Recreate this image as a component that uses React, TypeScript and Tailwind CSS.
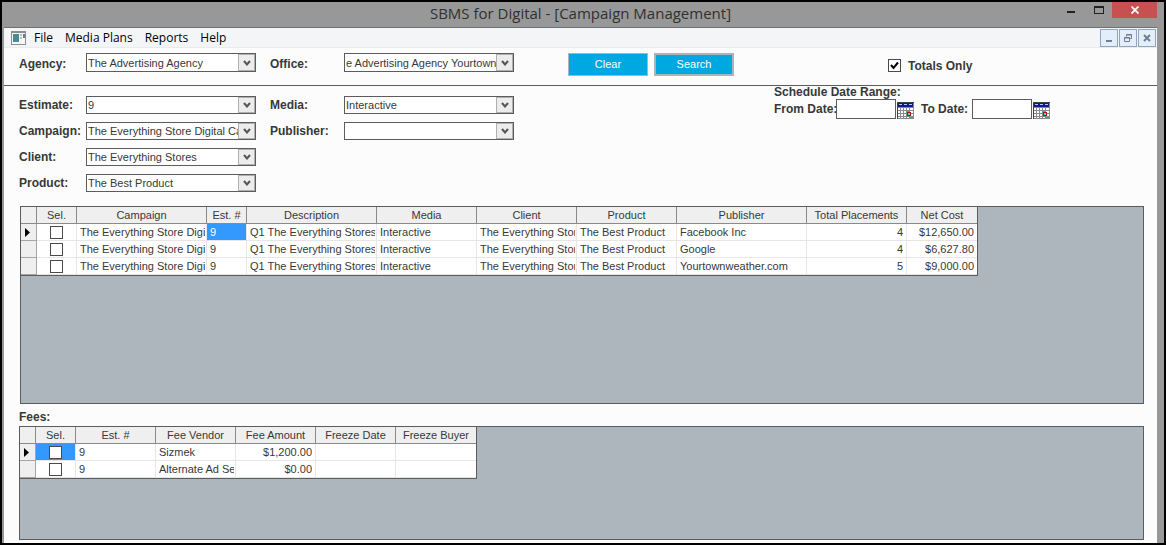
import type { ReactNode } from "react";

type Column = { label: string; width: string; align?: "right" };

const campaignColumns: Column[] = [
  { label: "Campaign", width: "w-[130px]" },
  { label: "Est. #", width: "w-10" },
  { label: "Description", width: "w-[130px]" },
  { label: "Media", width: "w-[100px]" },
  { label: "Client", width: "w-[100px]" },
  { label: "Product", width: "w-[100px]" },
  { label: "Publisher", width: "w-[130px]" },
  { label: "Total Placements", width: "w-[100px]", align: "right" },
  { label: "Net Cost", width: "w-[70px]", align: "right" },
];

const shared = ["Q1 The Everything Stores", "Interactive", "The Everything Stores", "The Best Product"];
const campaignRows: string[][] = [
  ["The Everything Store Digital", "9", ...shared, "Facebook Inc", "4", "$12,650.00"],
  ["The Everything Store Digital", "9", ...shared, "Google", "4", "$6,627.80"],
  ["The Everything Store Digital", "9", ...shared, "Yourtownweather.com", "5", "$9,000.00"],
];

const feeColumns: Column[] = [
  { label: "Est. #", width: "w-20" },
  { label: "Fee Vendor", width: "w-20" },
  { label: "Fee Amount", width: "w-20", align: "right" },
  { label: "Freeze Date", width: "w-20" },
  { label: "Freeze Buyer", width: "w-20" },
];
const feeRows: string[][] = [
  ["9", "Sizmek", "$1,200.00", "", ""],
  ["9", "Alternate Ad Server", "$0.00", "", ""],
];

type GridProps = {
  name: string;
  columns: Column[];
  rows: string[][];
  width: string;
  selected: number;
};

function Grid({ name, columns, rows, width, selected }: GridProps) {
  return (
    <table
      aria-label={name}
      className={`${width} table-fixed border-separate border-spacing-0 border-r border-b border-[#5c5c5c] bg-white text-[11px] leading-4`}
    >
      <colgroup>
        <col className="w-4" />
        <col className="w-10" />
        {columns.map((c) => (
          <col key={c.label} className={c.width} />
        ))}
      </colgroup>
      <thead>
        <tr className="h-[17px] bg-[#efefef]">
          <td className="border-r border-b border-[#8a8a8a] p-0" />
          <th className="border-r border-b border-[#8a8a8a] p-0 font-normal">Sel.</th>
          {columns.map((c) => (
            <th
              key={c.label}
              className="overflow-hidden border-r border-b border-[#8a8a8a] p-0 font-normal whitespace-nowrap last:border-r-0"
            >
              {c.label}
            </th>
          ))}
        </tr>
      </thead>
      <tbody>
        {rows.map((row, r) => (
          <tr key={r} className="h-[17px]">
            <td className="border-r border-b border-[#a5a5a5] bg-[#efefef] p-0">
              {r === 0 && (
                <svg className="ml-1 block h-[9px] w-[5px]" viewBox="0 0 5 9" aria-hidden="true">
                  <path d="M0 0L5 4.500L0 9Z" fill="#000" />
                </svg>
              )}
            </td>
            <td
              className={`border-r border-b border-[#e6e6e6] p-0 ${r === 0 && selected === 0 ? "bg-[#3399ff]" : ""}`}
            >
              <input
                type="checkbox"
                aria-label={`Select ${name} row ${r + 1}`}
                className="mx-auto block size-[13px] appearance-none border border-[#4a4a4a] bg-white"
              />
            </td>
            {row.map((cell, c) => (
              <td
                key={c}
                className={`border-r border-b border-[#e6e6e6] py-0 pl-[3px] last:border-r-0 ${
                  columns[c].align === "right" ? "pr-[3px] text-right" : "pr-px"
                } ${r === 0 && selected === c + 1 ? "bg-[#3399ff] text-white" : ""}`}
              >
                <div className="overflow-hidden whitespace-nowrap">{cell}</div>
              </td>
            ))}
          </tr>
        ))}
      </tbody>
    </table>
  );
}

type ComboProps = { id: string; label: string; value: string; labelWidth: string; tall?: boolean };

function Combo({ id, label, value, labelWidth, tall = false }: ComboProps) {
  return (
    <div className={`flex ${tall ? "items-end" : "items-center"}`}>
      <label htmlFor={id} className={`${labelWidth} text-xs font-bold whitespace-nowrap`}>
        {label}
      </label>
      <div className={`relative w-[170px] ${tall ? "h-[19px]" : "h-[18px]"}`}>
        <select
          id={id}
          defaultValue={value}
          className="block h-full w-full appearance-none rounded-none border border-[#5c5c5c] bg-white pr-4 pl-px text-[11px] leading-4"
        >
          <option>{value}</option>
        </select>
        <span className="pointer-events-none absolute inset-y-px right-px flex w-[17px] items-center justify-center border border-[#b0b0b0] bg-[#ececec]">
          <svg className="h-[6px] w-2" viewBox="0 0 8 6" fill="none" stroke="#555" strokeWidth="2" aria-hidden="true">
            <path d="M1 1L4 4.500L7 1" />
          </svg>
        </span>
      </div>
    </div>
  );
}

function CalendarIcon() {
  return (
    <svg className="block h-[17px] w-[17px]" viewBox="0 0 17 17" shapeRendering="crispEdges" aria-hidden="true">
      <rect width="17" height="17" fill="#8a8a8a" />
      <path d="M0 0h17v1H1v16H0z" fill="#404040" />
      <rect x="1" y="1" width="15" height="4" fill="#0a1a90" />
      <path d="M2 2h3v1H2zM7 2h3v1H7zM12 2h3v1h-3z" fill="#b8c4ff" />
      <path
        d="M1 6h2v2H1zM4 6h2v2H4zM7 6h2v2H7zM10 6h2v2h-2zM13 6h3v2h-3zM1 9h2v2H1zM4 9h2v2H4zM7 9h2v2H7zM13 9h3v2h-3zM1 12h2v2H1zM4 12h2v2H4zM7 12h2v2H7zM13 12h3v2h-3zM1 15h2v1H1zM4 15h2v1H4zM7 15h2v1H7zM10 15h2v1h-2z"
        fill="#fff"
      />
      <rect x="10" y="10" width="4" height="4" fill="#b01020" />
      <rect x="11" y="11" width="2" height="2" fill="#20e8f8" />
    </svg>
  );
}

function DateField({ id, label, labelWidth }: { id: string; label: string; labelWidth: string }) {
  return (
    <div className="flex items-center">
      <label htmlFor={id} className={`${labelWidth} text-xs font-bold whitespace-nowrap`}>
        {label}
      </label>
      <input id={id} type="text" className="h-5 w-[60px] border border-[#5c5c5c] bg-white px-1 text-[11px]" />
      <button type="button" aria-label={`${label} calendar`} className="ml-px self-end">
        <CalendarIcon />
      </button>
    </div>
  );
}

function ChildButton({ label, children }: { label: string; children: ReactNode }) {
  return (
    <button
      type="button"
      aria-label={label}
      className="flex h-[18px] w-[18px] items-center justify-center border border-[#8ea5bd] bg-[#e3eefa]"
    >
      {children}
    </button>
  );
}

export default function App() {
  return (
    <div className="flex min-h-screen flex-col border-2 border-black bg-[#989898] pr-[7px] pl-[2px] font-['Liberation_Sans',Arial,sans-serif] text-[#383838]">
      <header className="grid h-[25px] grid-cols-[1fr_auto_1fr]">
        <span />
        <h1 className="font-['Open_Sans','Segoe_UI',sans-serif] text-[15px] leading-[22px] text-[#303030]">
          SBMS for Digital - [Campaign Management]
        </h1>
        <div className="flex h-4 justify-end">
          <button type="button" aria-label="Minimize" className="flex w-7 items-center justify-center">
            <svg className="h-[10px] w-[10px]" viewBox="0 0 10 10" aria-hidden="true">
              <path d="M1 6h8v2H1z" fill="#202020" />
            </svg>
          </button>
          <button type="button" aria-label="Maximize" className="flex w-[27px] items-center justify-center">
            <svg className="h-[10px] w-[10px]" viewBox="0 0 10 10" aria-hidden="true">
              <path d="M0 1h10v8H0zM1 3v5h8V3z" fill="#202020" fillRule="evenodd" />
            </svg>
          </button>
          <button type="button" aria-label="Close" className="flex w-[45px] items-center justify-center bg-[#c75050]">
            <svg className="h-2 w-2" viewBox="0 0 8 8" stroke="#fff" strokeWidth="1.800" aria-hidden="true">
              <path d="M.5.500l7 7M7.500.500l-7 7" />
            </svg>
          </button>
        </div>
      </header>

      <main className="flex flex-1 flex-col border-t border-[#707070] bg-[#fcfcfc] pb-[3px]">
        <nav
          aria-label="Main menu"
          className="flex h-5 items-center border-b border-[#ebebeb] bg-[#f4f5f7] pr-px pl-[7px] font-['Open_Sans','Segoe_UI',sans-serif] text-xs text-black"
        >
          <svg className="mr-2 h-[14px] w-[15px]" viewBox="0 0 15 14" aria-hidden="true">
            <rect x=".5" y=".5" width="14" height="13" fill="#f7f7f7" stroke="#8a8f94" />
            <path d="M0 0h15v2H0z" fill="#8a8f94" />
            <rect x="2" y="3" width="6" height="8" fill="#4d8a96" />
            <path d="M9 3h2v2H9zM9 6h2v2H9z" fill="#b8bdc2" />
            <path d="M12 3h2v4h-2z" fill="#4d8a96" />
          </svg>
          <div className="flex gap-3">
            <button type="button">File</button>
            <button type="button">Media Plans</button>
            <button type="button">Reports</button>
            <button type="button">Help</button>
          </div>
          <div className="ml-auto flex gap-px">
            <ChildButton label="Minimize document">
              <svg className="h-[10px] w-[10px]" viewBox="0 0 10 10" aria-hidden="true">
                <path d="M2 7h6v2H2z" fill="#6c7f93" />
              </svg>
            </ChildButton>
            <ChildButton label="Restore document">
              <svg className="h-[10px] w-[10px]" viewBox="0 0 10 10" fill="none" stroke="#6c7f93" aria-hidden="true">
                <path d="M3.500 3.500v-2h5v4h-2M3 2h6M1.500 4.500h5v4h-5zM1 5h6" />
              </svg>
            </ChildButton>
            <ChildButton label="Close document">
              <svg className="h-2 w-2" viewBox="0 0 8 8" stroke="#6c7f93" strokeWidth="2" aria-hidden="true">
                <path d="M1 1l6 6M7 1l-6 6" />
              </svg>
            </ChildButton>
          </div>
        </nav>

        <section
          aria-label="Agency search"
          className="flex h-[38px] items-start border-b border-[#5c5c5c] pt-[5px] pl-[15px]"
        >
          <div className="flex gap-[14px]">
            <Combo id="agency" label="Agency:" value="The Advertising Agency" labelWidth="w-[67px]" tall />
            <Combo id="office" label="Office:" value="e Advertising Agency Yourtown" labelWidth="w-[74px]" tall />
          </div>
          <div className="ml-[54px] flex gap-[6px] text-[11px] text-white">
            <button type="button" className="h-[23px] w-20 border border-[#a9b4bd] bg-[#00a8e1]">
              Clear
            </button>
            <button type="button" className="h-[23px] w-20 border-2 border-[#a9b4bd] bg-[#00a8e1]">
              Search
            </button>
          </div>
          <label className="ml-[154px] flex h-[25px] items-center gap-[7px] text-xs font-bold">
            <span className="relative block size-[13px]">
              <input
                type="checkbox"
                defaultChecked
                className="peer block size-[13px] appearance-none border border-[#4a4a4a] bg-white"
              />
              <svg
                className="pointer-events-none absolute inset-0 hidden peer-checked:block"
                viewBox="0 0 13 13"
                fill="none"
                stroke="#000"
                strokeWidth="2"
                aria-hidden="true"
              >
                <path d="M3 6l2.500 3L10 3.500" />
              </svg>
            </span>
            Totals Only
          </label>
        </section>

        <section aria-label="Filters" className="flex pl-[15px]">
          <div className="flex flex-col gap-2 pt-[10px]">
            <Combo id="estimate" label="Estimate:" value="9" labelWidth="w-[67px]" />
            <Combo id="campaign" label="Campaign:" value="The Everything Store Digital Campaign" labelWidth="w-[67px]" />
            <Combo id="client" label="Client:" value="The Everything Stores" labelWidth="w-[67px]" />
            <Combo id="product" label="Product:" value="The Best Product" labelWidth="w-[67px]" />
          </div>
          <div className="ml-[14px] flex flex-col gap-2 pt-[10px]">
            <Combo id="media" label="Media:" value="Interactive" labelWidth="w-[74px]" />
            <Combo id="publisher" label="Publisher:" value="" labelWidth="w-[74px]" />
          </div>
          <fieldset className="ml-[260px]">
            <legend className="text-xs leading-[13px] font-bold">Schedule Date Range:</legend>
            <div className="flex gap-[7px]">
              <DateField id="from-date" label="From Date:" labelWidth="w-[62px]" />
              <DateField id="to-date" label="To Date:" labelWidth="w-[51px]" />
            </div>
          </fieldset>
        </section>

        <section
          aria-label="Campaigns"
          className="mt-[14px] mr-[13px] ml-4 min-h-[198px] border border-[#5c5c5c] bg-[#adb5bd]"
        >
          <Grid name="Campaigns" columns={campaignColumns} rows={campaignRows} width="w-[957px]" selected={2} />
        </section>

        <h2 className="pt-1 pl-[15px] text-xs leading-[18px] font-bold">Fees:</h2>
        <section
          aria-label="Fees"
          className="mr-[13px] ml-[15px] min-h-[100px] flex-1 border border-[#5c5c5c] bg-[#adb5bd]"
        >
          <Grid name="Fees" columns={feeColumns} rows={feeRows} width="w-[457px]" selected={0} />
        </section>
      </main>
    </div>
  );
}
